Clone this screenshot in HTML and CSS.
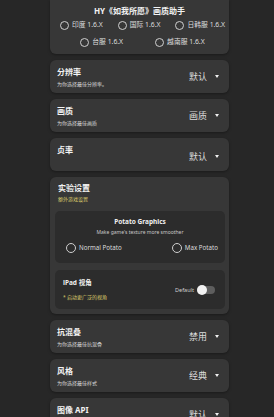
FILE: index.html
```html
<!DOCTYPE html>
<html lang="zh">
<head>
    <meta charset="UTF-8">
    <meta name="viewport" content="width=device-width, initial-scale=1.0">
    <title>HY 画质助手</title>
    <link rel="stylesheet" href="styles.css">
</head>
<body>
    <div class="page">
        <div class="card head">
            <h1 class="head-title">HY《如我所愿》画质助手</h1>
            <div class="radio-row">
                <label class="radio"><span class="dot"></span>印度 1.6.X</label>
                <label class="radio"><span class="dot"></span>国际 1.6.X</label>
                <label class="radio"><span class="dot"></span>日韩服 1.6.X</label>
            </div>
            <div class="radio-row second">
                <label class="radio"><span class="dot"></span>台服 1.6.X</label>
                <label class="radio"><span class="dot"></span>越南服 1.6.X</label>
            </div>
        </div>

        <div class="card option">
            <div class="option-text">
                <div class="option-title">分辨率</div>
                <div class="option-desc">为你选择最佳分辨率。</div>
            </div>
            <div class="option-value">默认</div>
            <span class="caret"></span>
        </div>

        <div class="card option">
            <div class="option-text">
                <div class="option-title">画质</div>
                <div class="option-desc">为你选择最佳画质</div>
            </div>
            <div class="option-value">画质</div>
            <span class="caret"></span>
        </div>

        <div class="card option no-desc">
            <div class="option-text">
                <div class="option-title">贞率</div>
            </div>
            <div class="option-value">默认</div>
            <span class="caret"></span>
        </div>

        <div class="card lab">
            <div class="option-title">实验设置</div>
            <div class="lab-desc">额外游戏设置</div>

            <div class="inner potato">
                <div class="potato-title">Potato Graphics</div>
                <div class="potato-desc">Make game's texture more smoother</div>
                <div class="potato-row">
                    <label class="radio"><span class="dot"></span>Normal Potato</label>
                    <label class="radio"><span class="dot"></span>Max Potato</label>
                </div>
            </div>

            <div class="inner ipad">
                <div class="ipad-text">
                    <div class="ipad-title">iPad 视角</div>
                    <div class="ipad-desc">* 启动更广泛的视角</div>
                </div>
                <span class="toggle-label">Default</span>
                <span class="toggle"><span class="knob"></span></span>
            </div>
        </div>

        <div class="card option">
            <div class="option-text">
                <div class="option-title">抗混叠</div>
                <div class="option-desc">为你选择最佳抗混叠</div>
            </div>
            <div class="option-value">禁用</div>
            <span class="caret"></span>
        </div>

        <div class="card option">
            <div class="option-text">
                <div class="option-title">风格</div>
                <div class="option-desc">为你选择最佳样式</div>
            </div>
            <div class="option-value">经典</div>
            <span class="caret"></span>
        </div>

        <div class="card option">
            <div class="option-text">
                <div class="option-title">图像 API</div>
                <div class="option-desc">为你选择最佳图像 API</div>
            </div>
            <div class="option-value">默认</div>
            <span class="caret"></span>
        </div>
    </div>
</body>
</html>
```

FILE: styles.css
```css
body {
    margin: 0;
    padding: 0;
    background-color: #272727;
    color: #eeeeee;
    font-family: 'Noto Sans', 'Noto Sans CJK SC', sans-serif;
    overflow: hidden;
}
.page {
    width: 179px;
    margin-left: 50px;
    display: flex;
    flex-direction: column;
    gap: 6px;
}
.card {
    background: #373737;
    border-radius: 6px;
    box-shadow: 0 1px 3px rgba(0,0,0,0.35);
    box-sizing: border-box;
    flex-shrink: 0;
}
.head {
    border-radius: 0 0 6px 6px;
    height: 54px;
    padding-top: 5px;
}
.head-title {
    margin: 0;
    font-size: 8px;
    line-height: 12px;
    height: 12px;
    font-weight: bold;
    text-align: center;
    color: #f2f2f2;
}
.radio-row {
    display: flex;
    justify-content: center;
    gap: 15px;
    margin-top: 3px;
    padding-left: 6px;
    height: 10px;
}
.radio-row.second {
    gap: 32px;
    margin-top: 7px;
}
.radio {
    display: flex;
    align-items: center;
    gap: 3px;
    font-size: 6.8px;
    line-height: 10px;
    height: 10px;
    color: #dddddd;
    white-space: nowrap;
}
.dot {
    width: 9px;
    height: 9px;
    border: 1.3px solid #cfcfcf;
    border-radius: 50%;
    box-sizing: border-box;
    flex-shrink: 0;
}
.option {
    display: flex;
    align-items: center;
    height: 33px;
    padding: 0 10px 0 7px;
}
.option-text {
    flex: 1;
}
.option-title {
    font-size: 8px;
    line-height: 12px;
    height: 12px;
    font-weight: bold;
    color: #f2f2f2;
}
.option-desc {
    margin-top: 2px;
    font-size: 5px;
    line-height: 8px;
    height: 8px;
    color: #d8d8d8;
}
.no-desc {
    align-items: flex-start;
    padding-top: 6px;
}
.no-desc .option-value {
    margin-top: 7px;
}
.no-desc .caret {
    margin-top: 11px;
}
.option-value {
    font-size: 9px;
    line-height: 12px;
    height: 12px;
    color: #dcdcdc;
    margin-right: 8px;
}
.caret {
    width: 0;
    height: 0;
    border-left: 2.5px solid transparent;
    border-right: 2.5px solid transparent;
    border-top: 3px solid #f0f0f0;
}
.lab {
    height: 137px;
    padding: 5px 4px 0 5px;
}
.lab > .option-title {
    padding-left: 3px;
}
.lab-desc {
    padding-left: 3px;
    margin-top: 1px;
    font-size: 5px;
    line-height: 8px;
    height: 8px;
    color: #d9c96b;
}
.inner {
    background: #2c2c2c;
    border-radius: 5px;
    box-sizing: border-box;
}
.potato {
    margin-top: 8px;
    height: 52px;
    padding: 6px 7px 0 11px;
}
.potato-title {
    font-size: 6.5px;
    line-height: 10px;
    height: 10px;
    font-weight: bold;
    text-align: center;
    color: #f0f0f0;
    padding-right: 4px;
}
.potato-desc {
    margin-top: 1px;
    font-size: 5px;
    line-height: 9px;
    height: 9px;
    text-align: center;
    color: #c8c8c8;
    padding-right: 4px;
}
.potato-row {
    display: flex;
    justify-content: space-between;
    margin-top: 6px;
}
.potato-row .radio {
    font-size: 6.2px;
}
.potato-row .dot {
    width: 10px;
    height: 10px;
}
.ipad {
    margin-top: 7px;
    height: 39px;
    display: flex;
    align-items: center;
    padding: 0 10px 0 8px;
}
.ipad-text {
    flex: 1;
}
.ipad-title {
    font-size: 6.5px;
    line-height: 10px;
    height: 10px;
    font-weight: bold;
    color: #eeeeee;
}
.ipad-desc {
    margin-top: 5px;
    font-size: 5px;
    line-height: 8px;
    height: 8px;
    color: #d9c96b;
}
.toggle-label {
    font-size: 5.5px;
    color: #d0d0d0;
    margin-right: 3px;
}
.toggle {
    position: relative;
    width: 18px;
    height: 8px;
    border-radius: 4px;
    background: #5e5e5e;
}
.knob {
    position: absolute;
    left: 0;
    top: -1px;
    width: 10px;
    height: 10px;
    border-radius: 50%;
    background: #f2f2f2;
}
```
